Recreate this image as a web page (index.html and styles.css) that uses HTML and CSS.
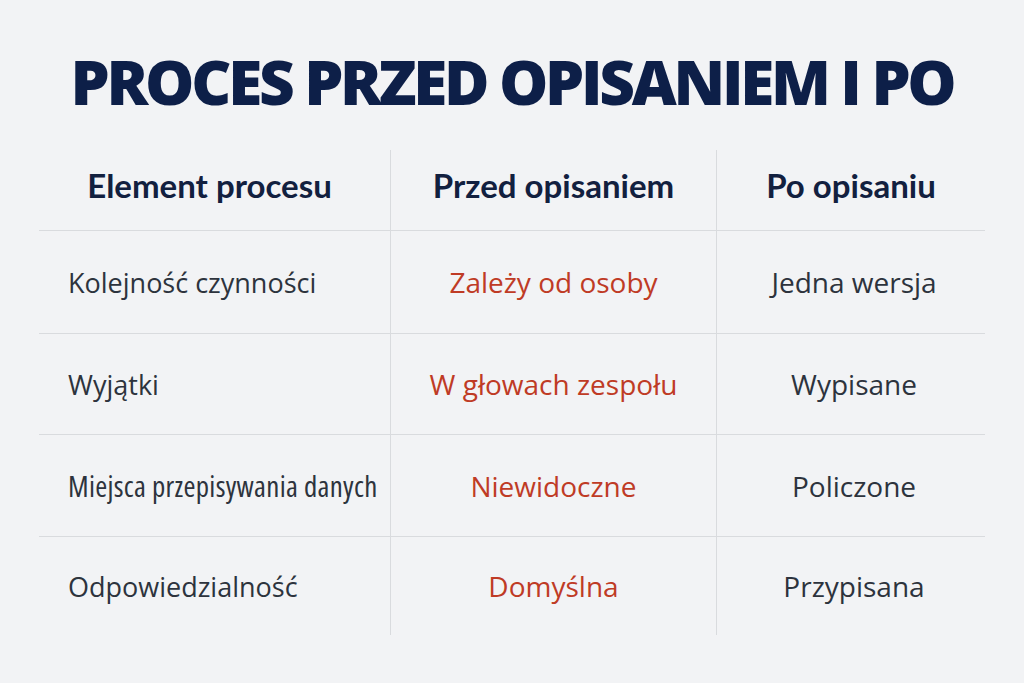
FILE: index.html
```html
<!DOCTYPE html>
<html lang="pl">
<head>
<meta charset="utf-8">
<title>Proces przed opisaniem i po</title>
<link rel="stylesheet" href="styles.css">
</head>
<body>
<h1 class="title">PROCES PRZED OPISANIEM I PO</h1>
<div class="table">
  <div class="cell head first">Element procesu</div>
  <div class="cell head mid">Przed opisaniem</div>
  <div class="cell head last">Po opisaniu</div>

  <div class="cell name">Kolejność czynności</div>
  <div class="cell before">Zależy od osoby</div>
  <div class="cell after">Jedna wersja</div>

  <div class="cell name">Wyjątki</div>
  <div class="cell before">W głowach zespołu</div>
  <div class="cell after">Wypisane</div>

  <div class="cell name small">Miejsca przepisywania danych</div>
  <div class="cell before">Niewidoczne</div>
  <div class="cell after">Policzone</div>

  <div class="cell name end">Odpowiedzialność</div>
  <div class="cell before end">Domyślna</div>
  <div class="cell after end">Przypisana</div>
</div>
</body>
</html>
```

FILE: styles.css
```css
html, body {
  margin: 0;
  padding: 0;
}
body {
  width: 1024px;
  height: 683px;
  overflow: hidden;
  background: #f2f3f5;
  font-family: "Open Sans", "Noto Sans", sans-serif;
}
.title {
  margin: 0;
  padding-top: 40px;
  height: 82px;
  line-height: 82px;
  text-align: center;
  font-family: "Open Sans", sans-serif;
  font-size: 62px;
  font-weight: 800;
  letter-spacing: -3.3px;
  color: #0d1f48;
}
.table {
  margin: 28px 39px 0 39px;
  display: grid;
  grid-template-columns: 351px 326px 269px;
  grid-template-rows: 81px 103px 101px 102px 98px;
}
.cell {
  display: flex;
  align-items: center;
  justify-content: center;
  white-space: nowrap;
  border-bottom: 1px solid #d9dbde;
  font-size: 27px;
  color: #2d333d;
}
.cell.end {
  border-bottom: none;
}
.before, .after, .mid, .last {
  border-left: 1px solid #d9dbde;
}
.head {
  font-family: Lato, "Open Sans", sans-serif;
  font-weight: 700;
  font-size: 33px;
  color: #12203f;
  padding-bottom: 10px;
}
.head.first {
  padding-right: 10px;
}
.name {
  justify-content: flex-start;
  padding-left: 29px;
}
.name.small {
  font-size: 29px;
  font-stretch: 75%;
  letter-spacing: 0.3px;
}
.before, .after {
  font-size: 28px;
}
.before {
  color: #bf3b25;
}
.after {
  padding-left: 6px;
}
```
